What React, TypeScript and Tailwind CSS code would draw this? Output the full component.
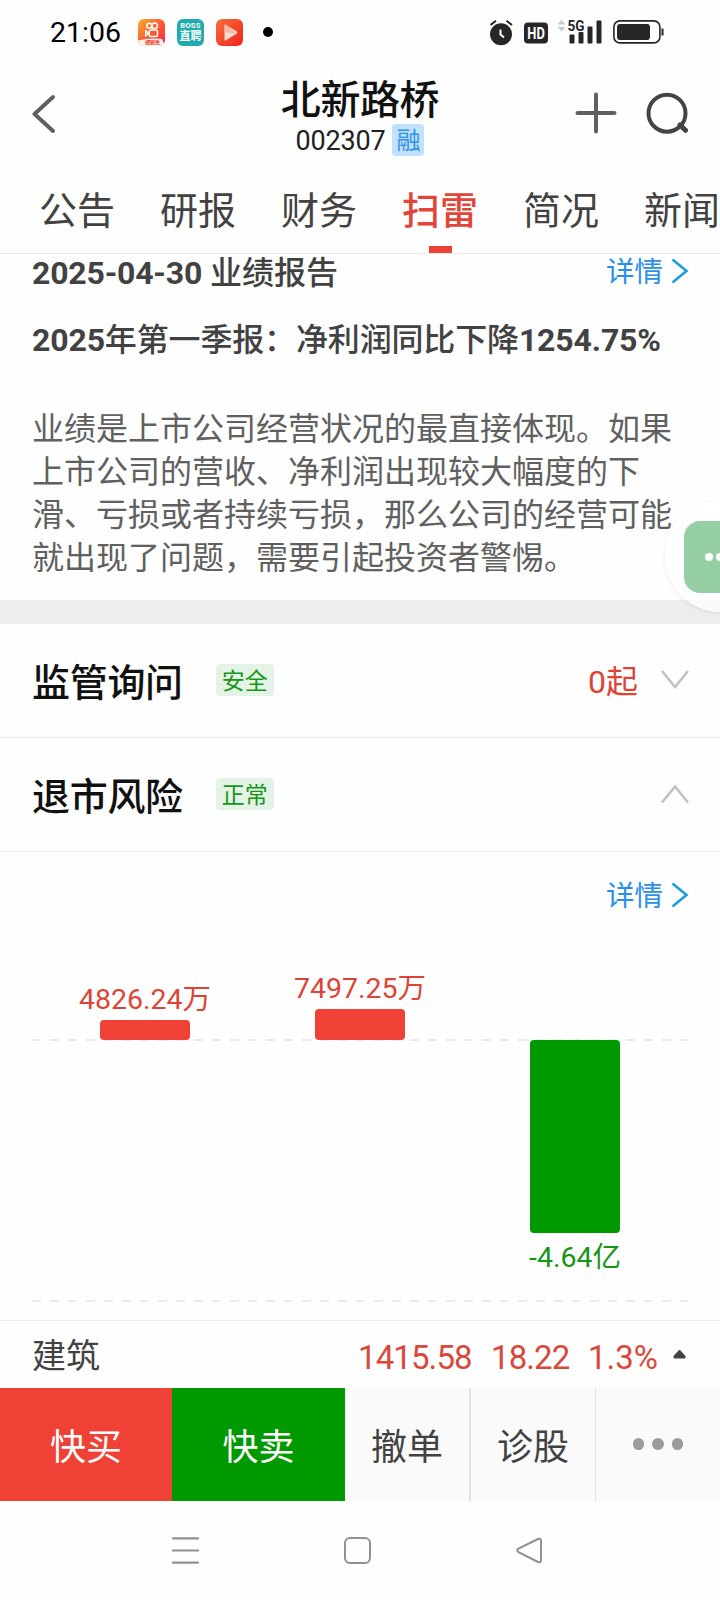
const tabs: string[] = ["公告", "研报", "财务", "扫雷", "简况", "新闻"];

const bars = [
  { label: "4826.24万", height: 20, up: true },
  { label: "7497.25万", height: 31, up: true },
  { label: "-4.64亿", height: 193, up: false },
];

function StatusBar() {
  return (
    <div className="flex h-16 items-center pl-[50px] pr-[56px]">
      <span className="w-[88px] pt-[2px] text-[28.5px] leading-8 text-black">21:06</span>
      <svg width="27" height="27" viewBox="0 0 27 27">
        <defs>
          <linearGradient id="ks" x1="0" y1="0" x2="1" y2="1">
            <stop offset="0" stopColor="#fbb02a" />
            <stop offset="0.5" stopColor="#fb5a31" />
            <stop offset="1" stopColor="#fb2745" />
          </linearGradient>
          <clipPath id="ksClip">
            <rect width="27" height="27" rx="6" />
          </clipPath>
        </defs>
        <g clipPath="url(#ksClip)">
          <rect width="27" height="27" fill="url(#ks)" />
          <path d="M0 21.5 Q12 18.5 24 20 L27 27 H0Z" fill="#fff3ea" />
        </g>
        <g fill="none" stroke="#fff" strokeWidth="1.5">
          <circle cx="11.3" cy="6.8" r="2.5" />
          <circle cx="16.7" cy="6.8" r="2.8" />
          <rect x="11.2" y="11" width="8.3" height="6.6" rx="1.8" />
          <path d="M11 14.3 L7.7 12 V16.8Z" />
        </g>
        <text x="7" y="25.4" fontSize="5" fontWeight="700" fill="#e8352c">
          短剧免
        </text>
      </svg>
      <div className="ml-3 flex h-[27px] w-[27px] flex-col items-center rounded-md bg-[#1eacae] pt-[3px] font-bold text-white">
        <span className="text-[7.5px] leading-[8px] tracking-[0.3px]">BOSS</span>
        <span className="text-[11px] leading-[13px]">直聘</span>
      </div>
      <svg className="ml-3" width="27" height="27" viewBox="0 0 27 27">
        <defs>
          <linearGradient id="play" x1="0" y1="0" x2="1" y2="1">
            <stop offset="0" stopColor="#f4713c" />
            <stop offset="1" stopColor="#f2221b" />
          </linearGradient>
        </defs>
        <rect width="27" height="27" rx="6" fill="url(#play)" />
        <path d="M8.5 7 Q8.5 5 10 5.900 L20.500 12.300 Q22 13.500 20.500 14.700 L10 21.200 Q8.500 22 8.500 20.500Z" fill="#fddad1" />
        <path d="M8.500 7 Q8.500 5 10 5.900 L14.500 9 L20 15 L8.500 13Z" fill="#fbb7a5" />
      </svg>
      <span className="ml-5 h-[10px] w-[10px] rounded-full bg-black" />

      <svg className="ml-auto" width="24" height="27" viewBox="0 0 24 27">
        <circle cx="11" cy="15.300" r="11" fill="#262626" />
        <path d="M0.500 6 L6 1.800 M22 6 L16.500 1.800" stroke="#262626" strokeWidth="2" fill="none" />
        <path d="M10.500 10.500 V15.500 L14 18.500" stroke="#fff" strokeWidth="2" fill="none" />
      </svg>
      <svg className="ml-[8px] mt-[2px]" width="28" height="32" viewBox="-2 -5 28 32">
        <rect y="0.500" width="24" height="21" rx="4" fill="#262626" />
        <text x="3.300" y="17" fontSize="17" fontWeight="700" textLength="17.500" lengthAdjust="spacingAndGlyphs" fill="#fff">
          HD
        </text>
      </svg>
      <svg className="ml-[7px]" width="46" height="40" viewBox="0 -7 46 40">
        <path d="M0.500 5.500 L4.500 1 L8.500 5.500Z M0.500 8 L4.500 12.500 L8.500 8Z" fill="#c9c9c9" />
        <text x="10.500" y="11.500" fontSize="15" fontWeight="700" textLength="17" lengthAdjust="spacingAndGlyphs" fill="#262626">
          5G
        </text>
        <g fill="#262626">
          <rect x="12.500" y="15.500" width="5" height="9" rx="1" />
          <rect x="21.500" y="13" width="5" height="11.500" rx="1" />
          <rect x="30.500" y="7.500" width="5" height="17" rx="1" />
          <rect x="39.500" y="1.500" width="5" height="23" rx="1" />
        </g>
      </svg>
      <svg className="ml-[10px]" width="51" height="24" viewBox="0 0 51 24">
        <rect x="0.900" y="0.900" width="46" height="22" rx="6" fill="none" stroke="#262626" strokeWidth="1.600" />
        <rect x="4" y="4" width="33" height="16" rx="3" fill="#262626" />
        <path d="M49.500 8.500 V15.500" stroke="#262626" strokeWidth="2" />
      </svg>
    </div>
  );
}

function Header() {
  return (
    <div className="flex h-[104px] justify-between pl-8 pr-8">
      <svg className="mt-[30px]" width="114" height="40" viewBox="0 0 114 40">
        <path d="M21 3 L2.500 20 L21 37" fill="none" stroke="#606060" strokeWidth="4" strokeLinecap="round" strokeLinejoin="round" />
      </svg>
      <div className="flex flex-col items-center pt-4">
        <div className="text-[40px] font-medium leading-[42px] tracking-[-0.4px] text-[#111]">北新路桥</div>
        <div className="mt-[2px] flex h-8 items-center">
          <span className="pt-[2px] text-[27px] leading-8 tracking-[-0.2px] text-[#222]">002307</span>
          <span className="ml-[7px] flex h-8 w-8 items-center justify-center rounded-sm bg-[#c2e0ff] pt-px text-[24px] leading-8 text-[#2d93ea]">
            融
          </span>
        </div>
      </div>
      <svg className="mt-[26px]" width="114" height="46" viewBox="0 0 114 46">
        <path d="M22 4.500 V41.500 M3.500 23 H40.500" stroke="#606060" strokeWidth="4" strokeLinecap="round" />
        <circle cx="93" cy="23.200" r="18.500" fill="none" stroke="#444" strokeWidth="4" />
        <path d="M106 35 L111.500 40.300" stroke="#444" strokeWidth="5" strokeLinecap="round" />
      </svg>
    </div>
  );
}

function Tabs() {
  return (
    <div className="flex h-[86px] gap-[45px] overflow-hidden border-b border-[#ebebeb] pl-[39px]">
      {tabs.map((tab) => {
        const active = tab === "扫雷";
        return (
          <div key={tab} className="flex w-[76px] shrink-0 flex-col items-center">
            <div className={`mt-[19px] text-[38px] leading-[48px] ${active ? "font-medium text-[#e2453a]" : "text-[#424242]"}`}>
              {tab}
            </div>
            {active && <div className="mt-auto h-[7px] w-[23px] bg-[#ee4136]" />}
          </div>
        );
      })}
    </div>
  );
}

function DetailLink() {
  return (
    <div className="flex items-center text-[28.5px] leading-8 text-[#2a8fe6]">
      详情
      <svg className="-mt-1 ml-2" width="18" height="26" viewBox="0 0 18 26">
        <path d="M1.500 1.500 L15.500 13 L1.500 24.500" fill="none" stroke="#1b9be9" strokeWidth="2.600" />
      </svg>
    </div>
  );
}

function Report() {
  return (
    <div className="h-[346px] pl-8 pr-[31px]">
      <div className="flex h-[34px] items-center justify-between pt-[3px]">
        <div className="text-[32px] font-medium leading-8 text-[#424242]">
          <span className="font-bold tracking-[-0.2px]">2025-04-30</span> 业绩报告
        </div>
        <DetailLink />
      </div>
      <div className="mt-8 whitespace-nowrap text-[32px] font-medium leading-10 tracking-[-0.15px] text-[#424242]">
        <span className="font-bold">2025</span>年第一季报：净利润同比下降<span className="font-bold">1254.75%</span>
      </div>
      <p className="mt-12 w-[650px] text-[32px] leading-[43px] text-[#606060]">
        业绩是上市公司经营状况的最直接体现。如果
        <br />
        上市公司的营收、净利润出现较大幅度的下
        <br />
        滑、亏损或者持续亏损，那么公司的经营可能
        <br />
        就出现了问题，需要引起投资者警惕。
      </p>
    </div>
  );
}

function RiskRow({ title, tag, count, open }: { title: string; tag: string; count?: string; open?: boolean }) {
  return (
    <div className="flex h-[114px] items-center border-b border-[#ebebeb] pl-8 pr-[31px]">
      <span className="pt-1 text-[38px] font-medium leading-[48px] tracking-[-0.3px] text-[#111]">{title}</span>
      <span className="-mt-px ml-[33px] flex h-8 w-[58px] items-center justify-center rounded bg-[#e3f3e5] pt-[3px] text-[23px] leading-8 text-[#169516]">
        {tag}
      </span>
      <span className="ml-auto pt-[3px] text-[32px] leading-10 text-[#dc4437]">{count}</span>
      <svg className="-mt-px ml-[23px]" width="28" height="20" viewBox="0 0 28 20">
        <path d={open ? "M1 18.500 L14 2.500 L27 18.500" : "M1 1 L14 17 L27 1"} fill="none" stroke="#c0c0c0" strokeWidth="2.600" />
      </svg>
    </div>
  );
}

function Chart() {
  return (
    <div className="h-[468px] pl-8 pr-[31px]">
      <div className="flex h-[88px] items-center justify-end pt-px">
        <DetailLink />
      </div>
      <div className="relative h-[362px]">
        <svg className="absolute left-0 top-[99px]" width="656" height="264" viewBox="0 0 656 264">
          <path d="M0 1 H656 M0 262 H656" stroke="#ebebeb" strokeWidth="2" strokeDasharray="9 9" />
        </svg>
        <div className="relative flex h-full justify-between pl-[44px] pr-[45px]">
          {bars.map((bar) => (
            <div key={bar.label} className="flex w-[138px] flex-col items-center">
              {bar.up ? (
                <div className="flex h-[100px] flex-col items-center justify-end">
                  <span className="mb-1 text-[28.5px] leading-8 text-[#dc4437]">{bar.label}</span>
                  <div className="w-[90px] rounded bg-[#ef4135]" style={{ height: bar.height }} />
                </div>
              ) : (
                <div className="mt-[100px] flex flex-col items-center">
                  <div className="w-[90px] rounded bg-[#009900]" style={{ height: bar.height }} />
                  <span className="mt-[9px] text-[28.5px] leading-8 text-[#169516]">{bar.label}</span>
                </div>
              )}
            </div>
          ))}
        </div>
      </div>
    </div>
  );
}

function IndexRow() {
  return (
    <div className="flex h-[68px] items-center border-t border-[#ebebeb] pl-8 pr-[34px] text-[33px] text-[#d8483c]">
      <span className="w-[326px] pt-[2px] text-[34px] leading-10 text-[#424242]">建筑</span>
      <span className="w-[133px] pt-[6px] leading-10 tracking-[-0.9px]">1415.58</span>
      <span className="w-[97px] pt-[6px] leading-10 tracking-[-0.9px]">18.22</span>
      <span className="pt-[6px] leading-10">1.3%</span>
      <svg className="-mt-[2px] ml-auto" width="13" height="10" viewBox="0 0 13 10">
        <path d="M6.500 1 L12 7 V9 H1 V7Z" fill="#424242" stroke="#424242" strokeLinejoin="round" />
      </svg>
    </div>
  );
}

function ActionBar() {
  return (
    <div className="flex h-[113px] bg-[#fafafa] text-[36px] text-[#424242] [&>div]:flex [&>div]:items-center [&>div]:justify-center [&>div]:pt-[7px]">
      <div className="w-[172px] bg-[#ef4135] text-white">快买</div>
      <div className="w-[173px] bg-[#009900] text-white">快卖</div>
      <div className="w-[126px] border-r-2 border-[#e0e2ea]">撤单</div>
      <div className="w-[125px] border-r border-[#e0e2ea]">诊股</div>
      <div className="flex-1 gap-2">
        <span className="-mt-[8px] h-[11.5px] w-[11.5px] rounded-full bg-[#9c9c9c]" />
        <span className="-mt-[8px] h-[11.5px] w-[11.5px] rounded-full bg-[#9c9c9c]" />
        <span className="-mt-[8px] h-[11.5px] w-[11.5px] rounded-full bg-[#9c9c9c]" />
      </div>
    </div>
  );
}

function SystemNav() {
  return (
    <div className="flex h-[99px] pl-[171px] pt-[35px]">
      <svg width="29" height="29" viewBox="0 0 29 29">
        <path d="M2 2.300 H27 M2 14.500 H27 M2 26.700 H27" stroke="#909090" strokeWidth="2.200" strokeLinecap="round" />
      </svg>
      <svg className="ml-[143px]" width="29" height="29" viewBox="0 0 29 29">
        <rect x="2" y="2" width="25" height="25" rx="5" fill="none" stroke="#909090" strokeWidth="2" />
      </svg>
      <svg className="ml-[143px]" width="29" height="29" viewBox="0 0 29 29">
        <path d="M3.500 12.700 L23 3 Q26 2 26 4.800 V24.200 Q26 27 23 26 L3.500 16.200 Q0.800 14.500 3.500 12.700Z" fill="none" stroke="#909090" strokeWidth="2" />
      </svg>
    </div>
  );
}

export default function App() {
  return (
    <div className="relative h-[1600px] w-[720px] overflow-hidden bg-[#fefefe] font-['Roboto','Noto_Sans_CJK_SC',sans-serif]">
      <StatusBar />
      <Header />
      <Tabs />
      <Report />
      <div className="h-6 bg-[#ededed]" />
      <RiskRow title="监管询问" tag="安全" count="0起" />
      <RiskRow title="退市风险" tag="正常" open />
      <Chart />
      <IndexRow />
      <ActionBar />
      <SystemNav />

      {/* floating chat button, docked past the right edge */}
      <div className="absolute left-[665px] top-[501px] h-[111px] w-[111px] rounded-full bg-white/70 pl-[19px] pt-[20px] shadow-[0_1px_5px_rgba(0,0,0,0.07)]">
        <div className="flex h-[72px] w-[72px] items-center gap-[3px] rounded-2xl bg-[#95cfa3] pl-[21px]">
          <span className="h-2 w-2 rounded-full bg-white" />
          <span className="h-2 w-2 rounded-full bg-white" />
          <span className="h-2 w-2 rounded-full bg-white" />
        </div>
      </div>
    </div>
  );
}
